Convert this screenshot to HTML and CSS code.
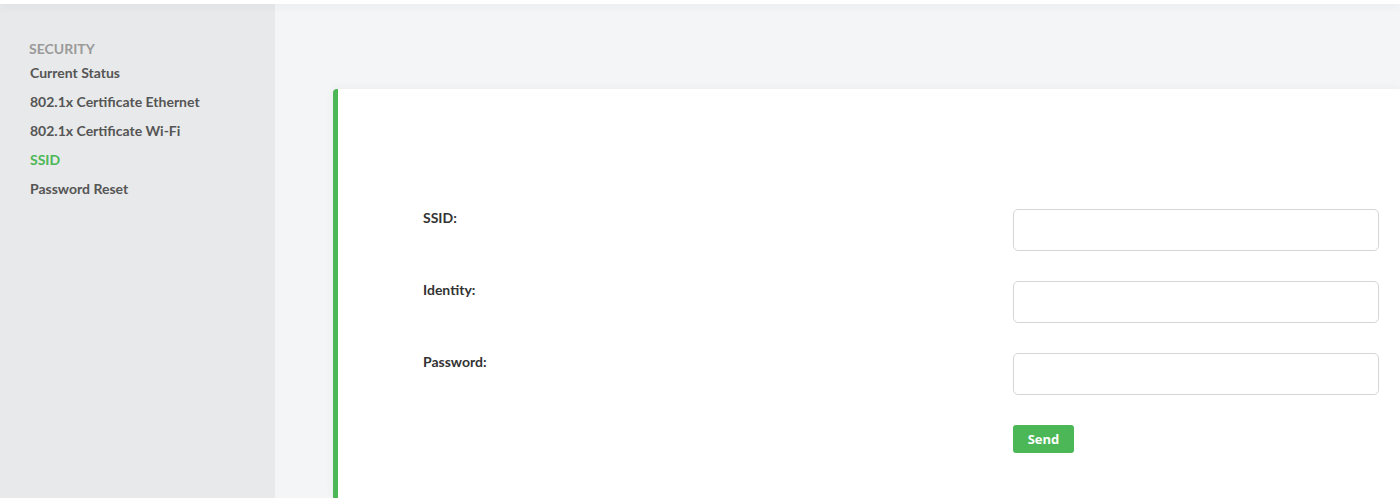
FILE: index.html
```html
<!DOCTYPE html>
<html lang="en">
<head>
  <meta charset="UTF-8" />
  <title>Security - SSID</title>
  <link rel="stylesheet" href="styles.css">
</head>
<body>
  <!-- Header strip -->
  <div class="top-bar"></div>

  <div class="layout">
    <!-- Sidebar -->
    <div class="sidebar">
      <div class="side-heading">Security</div>
      <a class="side-link" href="#">Current Status</a>
      <a class="side-link" href="#">802.1x Certificate Ethernet</a>
      <a class="side-link" href="#">802.1x Certificate Wi-Fi</a>
      <a class="side-link active" href="#">SSID</a>
      <a class="side-link" href="#">Password Reset</a>
    </div>

    <!-- Main content -->
    <div class="main">
      <div class="card">
        <form class="ssid-form" onsubmit="return false">
          <div class="form-row">
            <label class="form-label" for="ssid">SSID:</label>
            <input class="form-input" id="ssid" type="text">
          </div>
          <div class="form-row">
            <label class="form-label" for="identity">Identity:</label>
            <input class="form-input" id="identity" type="text">
          </div>
          <div class="form-row">
            <label class="form-label" for="password">Password:</label>
            <input class="form-input" id="password" type="password">
          </div>
          <div class="form-row">
            <span class="form-label"></span>
            <button class="btn-send" type="submit">Send</button>
          </div>
        </form>
      </div>
    </div>
  </div>
</body>
</html>
```

FILE: styles.css
```css
body {
  font-family: Lato, "Liberation Sans", sans-serif;
  background-color: #f4f5f6;
  color: #333;
  margin: 0;
  padding: 0;
  height: 498px;
  overflow: hidden;
}

.top-bar {
  position: relative;
  height: 4px;
  background-color: #fff;
  box-shadow: 0 2px 10px rgba(0, 0, 0, 0.07);
  z-index: 10;
}

.layout {
  display: flex;
  height: 494px;
}

/* Sidebar */
.sidebar {
  width: 275px;
  flex-shrink: 0;
  background-color: #e8e9ea;
  padding: 36px 0 0 29px;
  box-sizing: border-box;
}

.side-heading {
  font-size: 14px;
  font-weight: bold;
  color: #9a9a9a;
  text-transform: uppercase;
  line-height: 18px;
}

.side-link {
  display: block;
  font-size: 14px;
  font-weight: bold;
  color: #555;
  text-decoration: none;
  line-height: 29px;
  padding-left: 1px;
}

.side-link.active {
  color: #4cb757;
}

/* Main */
.main {
  flex: 1;
  padding: 85px 0 0 58px;
  overflow: hidden;
}

.card {
  background-color: #fff;
  border-left: 5px solid #4cb757;
  border-top-left-radius: 4px;
  box-shadow: 0 0 10px rgba(0, 0, 0, 0.05);
  height: 100%;
  padding: 120px 0 0 85px;
  box-sizing: border-box;
}

.form-row {
  display: flex;
  align-items: flex-start;
  margin-bottom: 30px;
}

.form-label {
  width: 590px;
  flex-shrink: 0;
  font-size: 14px;
  font-weight: bold;
  color: #333;
  line-height: 17px;
  padding-top: 0;
}

.form-input {
  width: 366px;
  height: 42px;
  box-sizing: border-box;
  border: 1px solid #d5d5d5;
  border-radius: 5px;
  background-color: #fff;
  padding: 0 10px;
  font-family: inherit;
  font-size: 14px;
  margin: 0;
}

.btn-send {
  width: 61px;
  height: 28px;
  background-color: #4cb757;
  color: #fff;
  border: none;
  border-radius: 3px;
  font-family: "Open Sans", sans-serif;
  font-size: 13px;
  font-weight: bold;
  cursor: pointer;
  padding: 0;
}
```
